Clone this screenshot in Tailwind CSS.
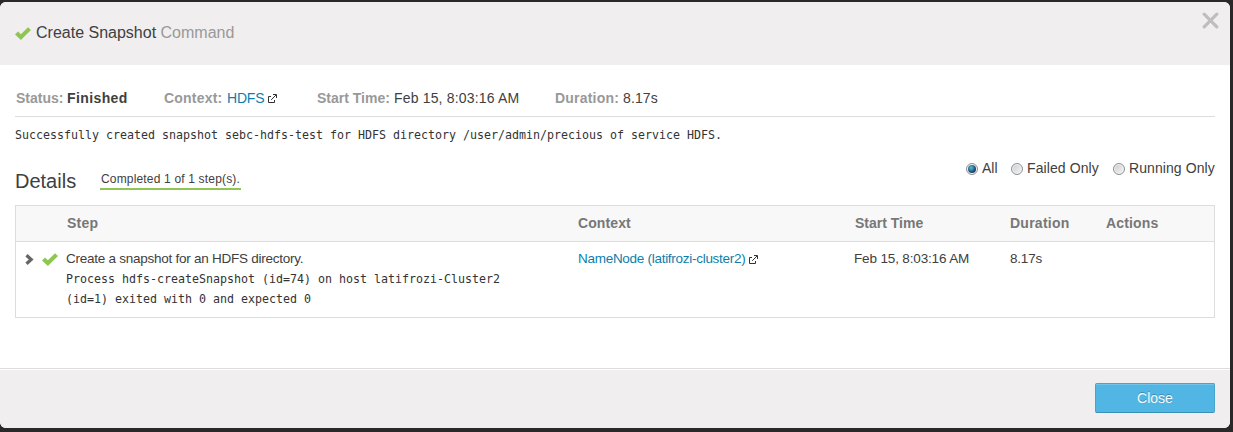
<!DOCTYPE html>
<html lang="en">
<head>
<meta charset="utf-8">
<title>Create Snapshot Command</title>
<script src="https://cdn.jsdelivr.net/npm/@tailwindcss/browser@4"></script>
</head>
<body class="h-[432px] w-[1233px] overflow-hidden bg-[#2a2829] pt-[2px] font-['Liberation_Sans',Arial,sans-serif] text-[14px] leading-5 text-[#404040]">
<svg class="hidden">
  <symbol id="check" viewBox="0 0 16 13"><path d="M0 7.6 3 4.6 5.9 7.3 13 0.2 16 3.1 5.9 13Z" fill="#8fc651"/></symbol>
  <symbol id="ext" viewBox="0 0 9 9"><path d="M3 2.5H.5V8.5H6.5V6M3.2 5.8 8 1M5 .5H8.5V4" fill="none" stroke="#333" stroke-width="1"/></symbol>
</svg>
<main class="flex h-[426px] w-[1230px] flex-col overflow-hidden rounded-[6px] bg-white">
  <header class="flex h-[63px] shrink-0 bg-[#f0eeef] pl-[15px] pr-[11px]">
    <svg class="mt-[25px] h-[13px] w-[16px]"><use href="#check"/></svg>
    <h1 class="ml-[5px] mt-[20px] text-[16px] leading-[22px]"><span>Create Snapshot</span> <span class="text-[#999]">Command</span></h1>
    <svg class="ml-auto mt-[10px] h-[17px] w-[17px]" viewBox="0 0 17 17"><path d="M2.2 2.2 14.8 14.8M14.8 2.2 2.2 14.8" stroke="#bfbebf" stroke-width="3.2" stroke-linecap="round"/></svg>
  </header>
  <section class="flex h-[303px] shrink-0 flex-col px-[15px]">
    <div class="flex h-[52px] shrink-0 border-b border-[#ddd] pt-[23px]">
      <div class="flex w-[149px] pl-px"><b class="w-[51px] text-[#999]">Status:</b><b class="tracking-[.4px]">Finished</b></div>
      <div class="flex w-[153px]"><b class="w-[63px] tracking-[.2px] text-[#999]">Context:</b><a class="w-[38px] tracking-[-.2px] text-[#0b7fad]">HDFS</a><svg class="ml-[3px] mt-[6px] h-[9px] w-[9px]"><use href="#ext"/></svg></div>
      <div class="flex w-[238px]"><b class="w-[77px] text-[#999]">Start Time:</b><span class="tracking-[.17px]">Feb 15, 8:03:16 AM</span></div>
      <div class="flex"><b class="w-[68px] tracking-[.2px] text-[#999]">Duration:</b><span class="tracking-[.1px]">8.17s</span></div>
    </div>
    <p class="mt-[8px] h-5 whitespace-pre font-['DejaVu_Sans_Mono',monospace] text-[11.63px] text-[#333]">Successfully created snapshot sebc-hdfs-test for HDFS directory /user/admin/precious of service HDFS.</p>
    <div class="flex h-[60px] shrink-0">
      <h2 class="mt-[24px] w-[85px] text-[20px] leading-6">Details</h2>
      <div class="mt-[26px] h-[19px] w-[141px] whitespace-nowrap border-b-2 border-[#8fc651] pl-px text-[12px] leading-[17px] tracking-[.17px]">Completed 1 of 1 step(s).</div>
      <div class="ml-auto flex pt-[13px]">
        <span class="mr-[4px] mt-[5px] flex h-[12px] w-[12px] items-center justify-center rounded-full border border-[#8e8f8f] bg-[#f4f4f4]"><i class="h-[8px] w-[8px] rounded-full bg-radial-[at_40%_35%] from-[#58bde5] to-[#0b3350] to-75%"></i></span><span class="w-[15px]">All</span>
        <span class="ml-[14px] mr-[4px] mt-[5px] h-[12px] w-[12px] rounded-full border border-[#8e8f8f] bg-linear-to-br from-[#c9ccd0] to-[#f6f6f6] shadow-[inset_0_0_0_1px_#f4f4f4]"></span><span class="w-[72px] whitespace-nowrap tracking-[.1px]">Failed Only</span>
        <span class="ml-[14px] mr-[4px] mt-[5px] h-[12px] w-[12px] rounded-full border border-[#8e8f8f] bg-linear-to-br from-[#c9ccd0] to-[#f6f6f6] shadow-[inset_0_0_0_1px_#f4f4f4]"></span><span class="w-[86px] whitespace-nowrap tracking-[.08px]">Running Only</span>
      </div>
    </div>
    <div class="h-[113px] border border-[#ddd]">
      <div class="grid h-[36px] grid-cols-[51px_511px_277px_155px_96px_1fr] border-b border-[#ddd] bg-[#f8f8f8] pt-[7px] font-bold text-[#777]">
        <span></span><span class="tracking-[.2px]">Step</span><span class="tracking-[.1px]">Context</span><span>Start Time</span><span class="tracking-[.25px]">Duration</span><span class="tracking-[.15px]">Actions</span>
      </div>
      <div class="grid grid-cols-[50px_512px_276px_156px_96px_1fr] pt-[7px] text-[13.5px] tracking-[-.25px]">
        <div class="flex pl-[9px]"><svg class="mt-[5px] h-[11px] w-[9px]" viewBox="0 0 9 11"><path d="M1.5 1.2 6.2 5.5 1.5 9.8" fill="none" stroke="#666" stroke-width="3.2"/></svg><svg class="ml-[8px] mt-[4px] h-[13px] w-[16px]"><use href="#check"/></svg></div>
        <div><p class="h-[20px]">Create a snapshot for an HDFS directory.</p><p class="whitespace-pre font-['DejaVu_Sans_Mono',monospace] text-[11.63px] tracking-normal text-[#333]">Process hdfs-createSnapshot (id=74) on host latifrozi-Cluster2
(id=1) exited with 0 and expected 0</p></div>
        <div class="flex"><a class="w-[168px] whitespace-nowrap tracking-[-.28px] text-[#0b7fad]">NameNode (latifrozi-cluster2)</a><svg class="ml-[3px] mt-[6px] h-[9px] w-[9px]"><use href="#ext"/></svg></div>
        <span class="tracking-[-.15px]">Feb 15, 8:03:16 AM</span><span class="tracking-[-.2px]">8.17s</span><span></span>
      </div>
    </div>
  </section>
  <footer class="flex h-[60px] shrink-0 justify-end border-t border-[#ddd] bg-[#f0eeef] pr-[15px] pt-[14px] shadow-[inset_0_1px_0_#fff]">
    <button class="h-[30px] w-[120px] rounded-[2px] border border-[#46a4cd] border-b-[#3b8fb5] bg-[#52b6e4] text-[#f4fafd] [text-shadow:0_-1px_0_rgba(0,0,0,.25)] shadow-[inset_0_1px_0_#72c4ea]">Close</button>
  </footer>
</main>
</body>
</html>
